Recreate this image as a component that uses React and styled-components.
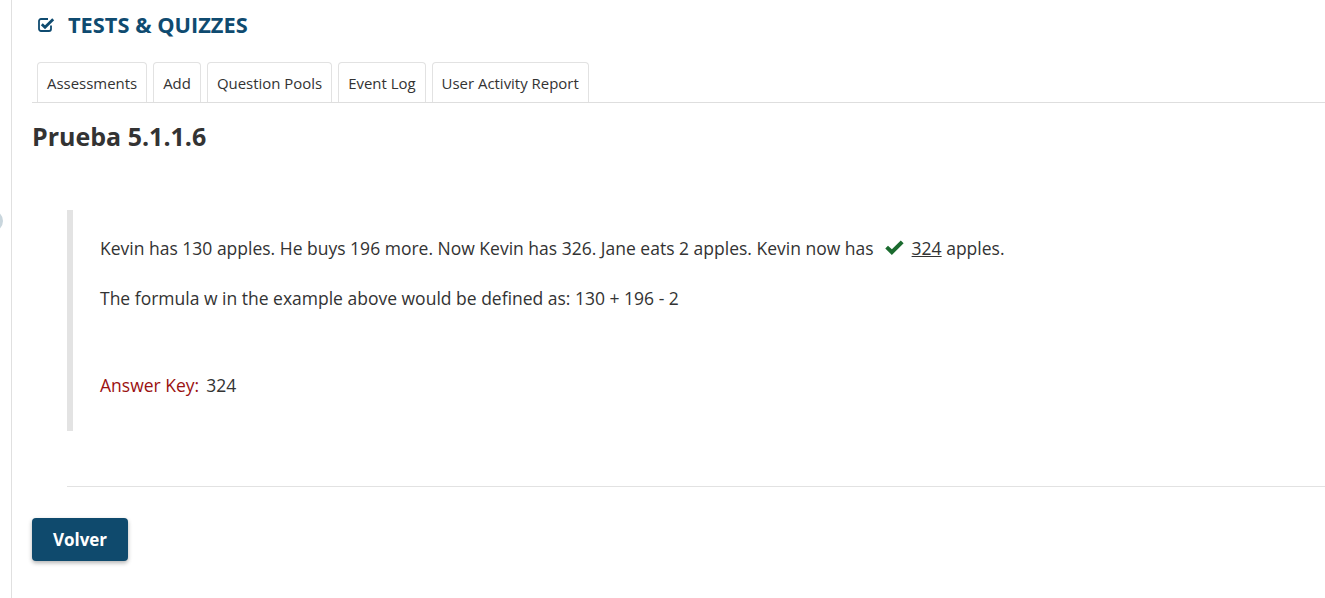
import styled, { createGlobalStyle } from "styled-components";

const GlobalStyle = createGlobalStyle`
  body {
    margin: 0;
    background: #ffffff;
    font-family: "Open Sans", "Liberation Sans", sans-serif;
    color: #333333;
  }
`;

const Page = styled.div`
  position: relative;
  min-height: 598px;
  overflow: hidden;
`;

const SideToggle = styled.div`
  position: absolute;
  left: -19px;
  top: 210px;
  width: 22px;
  height: 22px;
  border-radius: 50%;
  background: #c9d6dd;
`;

const Main = styled.main`
  margin-left: 11px;
  border-left: 1px solid #e0e0e0;
  min-height: 598px;
  padding-left: 20px;
  box-sizing: border-box;
`;

const ToolHeader = styled.h1`
  display: flex;
  align-items: center;
  gap: 13px;
  margin: 0;
  padding: 9px 0 0 6px;
  height: 30px;
  font-size: 21.8px;
  font-weight: 700;
  color: #0f4b70;
`;

const Tabs = styled.ul`
  display: flex;
  gap: 6px;
  list-style: none;
  margin: 23px 0 0;
  padding: 0 0 0 5px;
  border-bottom: 1px solid #dedede;
`;

const Tab = styled.li`
  height: 39px;
  display: flex;
  align-items: center;
  padding: 0 9px;
  border: 1px solid #e2e2e2;
  border-bottom: none;
  border-radius: 4px 4px 0 0;
  font-size: 14.95px;
  color: #333333;
`;

const Title = styled.h2`
  margin: 19px 0 0;
  font-size: 25px;
  line-height: 29px;
  font-weight: 700;
  color: #333333;
`;

const Question = styled.blockquote`
  margin: 59px 0 0 35px;
  padding: 26px 0 34px 27px;
  border-left: 6px solid #e3e3e3;
  font-size: 17.5px;
  line-height: 24px;
`;

const Line = styled.p`
  margin: 0 0 26px;
  display: flex;
  align-items: center;
  white-space: pre;
`;

const Answer = styled.u`
  text-decoration: underline;
`;

const CheckMark = styled.span`
  display: inline-flex;
  margin: 0 7px 0 10px;
`;

const KeyRow = styled.div`
  margin-top: 63px;
`;

const KeyLabel = styled.span`
  color: #9b1111;
  margin-right: 7px;
`;

const Divider = styled.hr`
  margin: 55px 0 0 35px;
  border: none;
  border-top: 1px solid #e2e2e2;
`;

const BackButton = styled.button`
  margin: 31px 0 0;
  width: 96px;
  height: 43px;
  border: none;
  border-radius: 4px;
  background: #0f4a6d;
  color: #ffffff;
  font-family: "Open Sans", "Liberation Sans", sans-serif;
  font-size: 17px;
  font-weight: 700;
  box-shadow: 0 2px 4px rgba(0, 0, 0, 0.3);
`;

const SquareCheck = () => (
  <svg width="17" height="17" viewBox="0 0 17 17">
    <path
      d="M13 9.5 V13 a2 2 0 0 1 -2 2 H3 a2 2 0 0 1 -2 -2 V5 a2 2 0 0 1 2 -2 H10"
      fill="none"
      stroke="#0f4b70"
      strokeWidth="1.8"
    />
    <path d="M3.8 8.2 L7 11.2 L15.2 3.2" fill="none" stroke="#0f4b70" strokeWidth="2.8" />
  </svg>
);

const GreenCheck = () => (
  <svg width="21" height="18" viewBox="0 0 20 17">
    <path d="M1.2 9 L3.8 6.3 L7.5 9.8 L16 1.3 L18.7 4 L7.5 15.2 Z" fill="#1b6b2f" />
  </svg>
);

const tabs = ["Assessments", "Add", "Question Pools", "Event Log", "User Activity Report"];

export default function App() {
  return (
    <Page>
      <GlobalStyle />
      <SideToggle />
      <Main>
        <ToolHeader>
          <SquareCheck />
          TESTS &amp; QUIZZES
        </ToolHeader>
        <Tabs>
          {tabs.map((t) => (
            <Tab key={t}>{t}</Tab>
          ))}
        </Tabs>
        <Title>Prueba 5.1.1.6</Title>
        <Question>
          <Line>
            Kevin has 130 apples. He buys 196 more. Now Kevin has 326. Jane eats 2 apples. Kevin now has
            <CheckMark>
              <GreenCheck />
            </CheckMark>
            <Answer>324</Answer> apples.
          </Line>
          <Line>The formula w in the example above would be defined as: 130 + 196 - 2</Line>
          <KeyRow>
            <KeyLabel>Answer Key:</KeyLabel>324
          </KeyRow>
        </Question>
        <Divider />
        <BackButton>Volver</BackButton>
      </Main>
    </Page>
  );
}
